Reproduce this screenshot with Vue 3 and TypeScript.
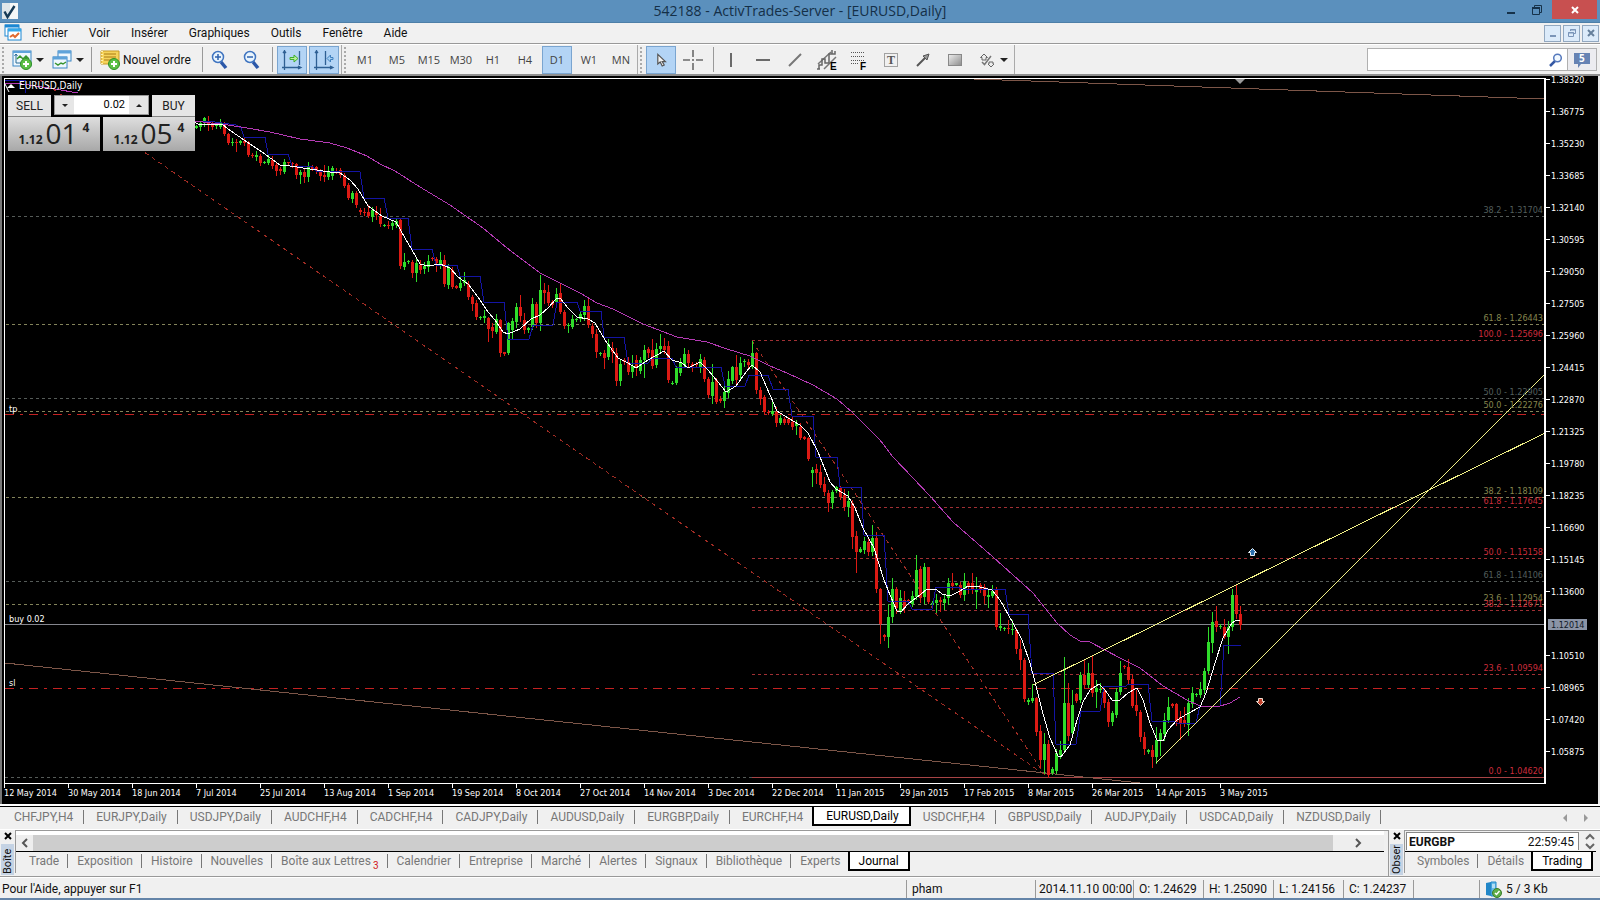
<script setup lang="ts">
import { ref } from 'vue'

interface Candle { x: number; high: number; top: number; bottom: number; low: number; up: boolean }
interface Level { y: number; label: string; kind: 'olive' | 'slate' | 'red'; from: number }

const menus = ['Fichier', 'Voir', 'Insérer', 'Graphiques', 'Outils', 'Fenêtre', 'Aide']
const timeframes = ['M1', 'M5', 'M15', 'M30', 'H1', 'H4', 'D1', 'W1', 'MN']
const timeframe = ref('D1')
const search = ref('')
const volume = ref('0.02')

const chartTabs = ['CHFJPY,H4', 'EURJPY,Daily', 'USDJPY,Daily', 'AUDCHF,H4', 'CADCHF,H4', 'CADJPY,Daily', 'AUDUSD,Daily', 'EURGBP,Daily', 'EURCHF,H4', 'EURUSD,Daily', 'USDCHF,H4', 'GBPUSD,Daily', 'AUDJPY,Daily', 'USDCAD,Daily', 'NZDUSD,Daily']
const chartTab = ref('EURUSD,Daily')
const boxTabs = ['Trade', 'Exposition', 'Histoire', 'Nouvelles', 'Boîte aux Lettres', 'Calendrier', 'Entreprise', 'Marché', 'Alertes', 'Signaux', 'Bibliothèque', 'Experts', 'Journal']
const boxTab = ref('Journal')
const marketTabs = ['Symboles', 'Détails', 'Trading']
const marketTab = ref('Trading')

const dates = ['12 May 2014', '30 May 2014', '18 Jun 2014', '7 Jul 2014', '25 Jul 2014', '13 Aug 2014', '1 Sep 2014', '19 Sep 2014', '8 Oct 2014', '27 Oct 2014', '14 Nov 2014', '3 Dec 2014', '22 Dec 2014', '11 Jan 2015', '29 Jan 2015', '17 Feb 2015', '8 Mar 2015', '26 Mar 2015', '14 Apr 2015', '3 May 2015']
const prices = Array.from({ length: 22 }, (_, i) => ({ y: i * 32 + 4, text: (1.3832 - i * 0.01545).toFixed(5) })).filter((_, i) => i !== 17)

const levels: Level[] = [
  { y: 216, label: '38.2 - 1.31704', kind: 'slate', from: 0 },
  { y: 324, label: '61.8 - 1.26443', kind: 'olive', from: 0 },
  { y: 340, label: '100.0 - 1.25696', kind: 'red', from: 752 },
  { y: 398, label: '50.0 - 1.22905', kind: 'slate', from: 0 },
  { y: 411, label: '50.0 - 1.22276', kind: 'olive', from: 0 },
  { y: 497, label: '38.2 - 1.18109', kind: 'olive', from: 0 },
  { y: 507, label: '61.8 - 1.17645', kind: 'red', from: 752 },
  { y: 558, label: '50.0 - 1.15158', kind: 'red', from: 752 },
  { y: 581, label: '61.8 - 1.14106', kind: 'slate', from: 0 },
  { y: 604, label: '23.6 - 1.12954', kind: 'olive', from: 0 },
  { y: 610, label: '38.2 - 1.12671', kind: 'red', from: 752 },
  { y: 674, label: '23.6 - 1.09594', kind: 'red', from: 752 },
]

// One bar every four pixels: direction, then high, body top, body bottom, low.
const bars = `g125,126,128,128 g121,123,127,130 g117,118,123,126 r116,121,125,130 r122,123,127,129 g123,125,126,128 g119,123,127,128 r122,125,134,135
r133,134,143,144 g138,142,143,145 r139,142,143,151 g140,141,143,144 r137,141,143,145 r141,142,155,156 r153,155,156,157 g151,155,157,160
r154,156,163,165 g161,162,163,163 g155,159,163,164 r156,160,166,168 r163,165,171,175 r167,169,171,174 g159,162,172,173 r162,162,163,165
r162,163,164,167 r163,164,175,178 g170,172,175,183 r168,172,177,182 g162,167,177,181 r165,167,169,170 r166,167,170,173 r169,171,176,180
r165,175,177,181 g166,171,177,179 g166,168,176,179 r168,171,172,173 r168,170,175,177 r173,175,186,187 r183,185,198,199 g191,193,199,202
r191,193,205,207 r208,210,212,214 r208,212,213,215 r205,212,216,217 g207,210,217,221 r206,212,215,219 r208,216,224,226 g224,225,226,226
r221,225,226,228 g221,223,226,229 g218,221,225,227 r219,220,266,268 g253,262,267,269 g260,261,262,263 r260,262,273,277 g258,263,273,281
r260,265,270,273 g262,266,269,273 g255,261,267,271 r257,258,259,260 r257,259,263,271 g252,260,264,268 r255,260,284,286 g264,267,285,288
r267,270,287,288 r285,286,288,288 g277,283,288,290 g272,280,283,285 r281,284,297,299 r295,297,304,310 r300,303,317,319 g316,317,318,319
g310,316,318,322 r317,318,329,341 r323,327,331,337 g314,319,332,333 r319,320,353,356 r352,352,354,355 g322,323,353,354 g318,321,330,339
g303,307,322,327 r295,307,316,321 r313,320,330,333 g327,328,330,332 g298,304,327,329 r302,304,323,327 g275,290,323,330 r283,290,293,303
r285,292,303,305 r300,302,305,307 g288,294,302,307 r284,293,312,313 r310,312,326,328 g323,325,326,332 g315,319,327,328 g318,319,320,321
g312,314,319,321 g300,306,315,320 r298,306,325,327 r323,326,334,337 r329,334,352,357 g352,353,354,355 r350,353,358,368 g339,344,357,359
r342,348,352,362 r348,353,381,385 g360,364,381,385 r358,360,362,364 r357,362,372,374 g355,366,372,377 r355,360,368,375 g357,360,371,373
g345,350,360,377 r347,349,353,357 r339,350,366,368 g343,349,365,367 g334,346,349,352 r338,346,350,353 r341,346,380,382 g381,383,384,384
g366,368,383,384 g358,363,373,375 g348,354,365,367 r350,354,363,367 r362,364,366,371 r362,364,365,366 g354,359,367,372 r357,360,379,381
r377,379,395,397 g364,382,396,403 r378,380,402,403 r396,399,401,402 g383,392,401,407 g371,379,393,397 g366,367,381,383 r355,367,380,384
g357,363,375,378 g359,361,362,366 r359,362,365,368 g341,353,367,368 r352,353,390,393 r387,390,399,404 r395,397,412,413 r410,412,413,414
g402,411,414,415 r407,412,423,426 g415,418,423,424 r417,419,423,424 r417,419,423,424 r417,422,427,429 g420,423,426,434 r423,427,438,439
r436,437,439,439 r437,438,459,460 g467,470,473,486 r464,469,473,483 r465,472,485,487 r477,484,492,495 r490,493,503,511 g490,492,503,508
g486,487,491,492 r486,488,497,499 r489,495,507,510 g491,501,507,516 r500,503,537,548 r531,536,552,572 g547,549,552,552 g537,541,550,553
r537,542,552,555 g525,538,552,555 r532,538,589,592 r588,589,624,643 r634,635,637,640 g604,617,637,647 g578,589,617,622 r587,589,608,613
g590,598,611,613 r591,600,608,612 r599,600,601,603 g591,596,604,606 g555,570,597,599 r566,569,598,602 g563,567,597,603 r567,567,602,603
g601,603,605,608 g594,600,603,612 r597,600,602,611 g595,599,603,609 g578,583,598,604 r573,583,586,589 g583,583,585,585 r582,585,595,597
g573,581,595,600 r581,583,587,593 r573,583,589,593 g577,589,592,608 r583,585,590,592 r584,587,596,603 g589,595,597,607 g585,591,596,597
r587,590,627,629 g613,626,628,630 g627,628,629,630 r620,628,629,633 g620,629,630,634 r628,630,649,653 r640,649,660,669 r658,660,699,701
g698,700,702,704 g684,698,701,702 r697,698,732,735 r725,731,760,767 g733,744,760,773 r740,744,775,777 g767,769,773,774 g749,753,771,773
g741,750,755,758 g657,703,750,752 r683,703,736,740 g690,705,733,737 r693,694,701,702 g672,675,700,702 r659,675,685,688 g663,673,685,687
r656,673,693,696 g680,688,692,707 g683,689,690,692 r688,690,703,707 r699,702,722,726 g711,713,722,725 g688,692,715,717 g661,673,692,694
r665,666,667,668 r659,667,680,684 r674,679,706,707 r690,705,711,715 r710,712,737,741 r732,737,749,754 g749,750,752,753 r745,750,757,767
g727,740,757,763 g729,733,740,755 g713,720,734,740 g697,707,720,722 r703,704,706,707 r703,704,722,725 r711,717,723,739 r707,720,724,726
g698,703,725,735 g687,693,704,707 g693,694,695,696 g682,689,695,697 g668,671,690,693 g627,642,671,673 g612,622,643,652 r606,621,627,631
g624,626,627,628 r619,627,637,638 g621,627,637,653 g589,595,627,630 r584,595,614,618 r606,614,625,629`

const candles: Candle[] = bars.split(/\s+/).map((bar, i) => {
  const [high, top, bottom, low] = bar.slice(1).split(',').map(Number)
  return { x: 196 + i * 4, high, top, bottom, low, up: bar[0] === 'g' }
})

const fastAverage = '194,122 200,125 222,124 228,129 247,142 262,152 280,165 290,166 310,169 330,172 340,173 350,180 358,189 368,206 382,216 396,222 405,238 412,250 420,264 428,266 440,264 450,268 458,277 468,284 478,297 488,312 495,320 503,332 508,334 515,331 520,329 531,319 540,315 548,308 556,299 560,298 568,308 577,317 588,319 595,323 605,340 618,358 628,363 636,368 648,360 664,351 672,360 682,363 688,368 700,362 708,370 718,382 726,392 736,386 746,372 752,365 760,372 770,395 777,411 788,418 800,425 808,433 818,452 830,482 836,489 848,496 855,508 863,528 874,548 884,580 890,595 897,611 901,612 908,604 920,595 927,589 937,590 942,594 950,596 960,591 968,586 980,587 992,590 1000,600 1013,623 1022,640 1030,663 1035,682 1042,710 1050,738 1058,756 1061,757 1070,745 1077,720 1083,702 1090,690 1099,684 1105,690 1112,700 1120,700 1128,693 1137,688 1143,700 1150,723 1157,740 1163,741 1168,730 1177,720 1187,714 1200,707 1206,693 1215,663 1223,638 1232,623 1237,620 1240,620'
const slowAverage = '194,121 228,125 247,128 270,132 300,139 330,143 347,148 367,156 380,164 395,171 420,187 450,205 483,228 507,248 527,263 540,273 560,283 580,293 597,303 613,309 643,324 677,337 707,342 727,349 750,356 770,366 787,373 813,385 837,399 853,413 880,440 893,457 913,478 930,496 953,522 993,557 1033,593 1057,623 1070,635 1080,641 1090,642 1120,658 1140,668 1163,686 1187,700 1200,706 1217,707 1230,703 1240,697'
const steps = '194,121 208,121 236,125 241,128 244,137 265,137 268,154 288,154 292,166 312,166 316,171 360,172 364,198 384,198 388,218 408,218 412,249 432,249 436,265 457,265 460,276 480,276 484,302 504,302 508,339 529,339 533,325 553,325 557,302 577,302 580,311 601,311 604,337 624,337 628,363 648,363 652,358 672,358 676,367 721,367 725,386 745,386 749,375 768,375 773,389 788,389 792,416 813,416 816,457 837,457 840,487 861,487 864,535 884,535 888,601 908,601 912,609 932,609 936,587 957,587 962,589 1005,589 1009,614 1028,614 1032,673 1053,673 1056,744 1076,744 1081,711 1100,711 1104,686 1126,686 1128,684 1148,684 1152,721 1175,721 1177,723 1196,723 1200,706 1220,706 1224,645 1241,645'

function stepVolume(delta: number) {
  volume.value = Math.max(0.01, Number(volume.value) + delta).toFixed(2)
}
</script>

<template>
  <div class="window">
    <header class="titlebar">
      <svg class="app-icon" width="16" height="16" viewBox="0 0 16 16">
        <rect width="16" height="16" fill="#dfe6ea" />
        <rect x="8" width="8" height="16" fill="#f4f7f8" />
        <path d="M2.5 8.5l3 5.5L12.5 3" fill="none" stroke="#163a56" stroke-width="2.4" />
      </svg>
      <h1>542188 - ActivTrades-Server - [EURUSD,Daily]</h1>
      <div class="window-buttons">
        <button aria-label="Réduire"><svg width="12" height="12"><path d="M2 9h8" stroke="#16324a" stroke-width="2" /></svg></button>
        <button aria-label="Restaurer"><svg width="12" height="12"><path d="M3.5 3V1.500h7v7H9M1.500 4h7v6.500h-7z" fill="none" stroke="#16324a" /><path d="M1 4h8" stroke="#16324a" stroke-width="2" /></svg></button>
        <button class="close" aria-label="Fermer"><svg width="12" height="12"><path d="M3 3l6 6M9 3l-6 6" stroke="#fff" stroke-width="2" /></svg></button>
      </div>
    </header>

    <nav class="menubar">
      <svg class="doc-icon" width="18" height="18" viewBox="0 0 18 18">
        <rect x="1" y="1" width="14" height="11" fill="#fff" stroke="#1c87d2" /><path d="M1 2h14" stroke="#1c87d2" stroke-width="3" />
        <rect x="4" y="5" width="13" height="11" fill="#fff" stroke="#1c87d2" /><path d="M4 6h13" stroke="#35a8ea" stroke-width="3" />
        <path d="M6 13l3-2 2 2 4-4" fill="none" stroke="#e06a30" stroke-width="2" />
      </svg>
      <button v-for="m in menus" :key="m" class="menu">{{ m }}</button>
      <div class="mdi-buttons">
        <button aria-label="Réduire la fenêtre"><svg width="10" height="10"><path d="M2 8h6" stroke="#7b95b8" stroke-width="2" /></svg></button>
        <button aria-label="Restaurer la fenêtre"><svg width="10" height="10"><path d="M3.500 3V1.500h5v4H7M1.500 4.500h5v4h-5z" fill="none" stroke="#7b95b8" /><path d="M3 2h6M1 5h6" stroke="#7b95b8" stroke-width="1" /></svg></button>
        <button aria-label="Fermer la fenêtre"><svg width="10" height="10"><path d="M2 2l6 6M8 2L2 8" stroke="#66809c" stroke-width="2" /></svg></button>
      </div>
    </nav>

    <div class="toolbar">
      <span class="grip"></span>
      <button class="tool drop" aria-label="Nouveau graphique">
        <svg width="20" height="20" viewBox="0 0 20 20">
          <rect x="1" y="1" width="18" height="15" fill="#eef7fd" stroke="#3b86c4" /><path d="M1 2h18" stroke="#5ea3da" stroke-width="2" />
          <path d="M4 4v9h11M2.500 6L4 4l1.500 2" fill="none" stroke="#2b6a94" /><path d="M5 9l3-3 3 3 3-3 3 3" fill="none" stroke="#38952e" stroke-width="1.500" />
          <circle cx="14" cy="14" r="5.500" fill="#5cc046" stroke="#2f8f24" /><path d="M14 11v6M11 14h6" stroke="#fff" stroke-width="2" />
        </svg>
        <i class="caret"></i>
      </button>
      <button class="tool drop" aria-label="Profils">
        <svg width="20" height="20" viewBox="0 0 20 20">
          <rect x="6" y="1" width="13" height="10" fill="#eef7fd" stroke="#3b86c4" /><path d="M6 2h13" stroke="#5ea3da" stroke-width="3" />
          <rect x="1" y="7" width="14" height="11" fill="#eef7fd" stroke="#3b86c4" /><path d="M1 8h14" stroke="#5ea3da" stroke-width="3" />
          <path d="M3 13l3 2 3-2 2 1 3-2" fill="none" stroke="#38952e" stroke-width="1.500" />
        </svg>
        <i class="caret"></i>
      </button>
      <span class="sep"></span>
      <button class="order">
        <svg width="20" height="20" viewBox="0 0 20 20">
          <path d="M1 1h18v13H1z" fill="#f6d35b" stroke="#c79a23" /><path d="M4 4h12M4 7h12M4 10h8" stroke="#a97a14" /><path d="M2 1v13" stroke="#fff1b0" stroke-dasharray="1 2" stroke-width="2" />
          <circle cx="14" cy="14" r="5.500" fill="#5cc046" stroke="#2f8f24" /><path d="M14 11v6M11 14h6" stroke="#fff" stroke-width="2" />
        </svg>
        Nouvel ordre
      </button>
      <span class="sep tight"></span>
      <button class="tool" aria-label="Zoom avant">
        <svg width="20" height="20" viewBox="0 0 20 20"><path d="M11 12l5 6" stroke="#2c58a8" stroke-width="3.500" /><circle cx="8" cy="7" r="5.500" fill="#eaf5fd" stroke="#3f74c0" stroke-width="1.500" /><path d="M8 4v6M5 7h6" stroke="#2f62ae" stroke-width="1.500" /></svg>
      </button>
      <button class="tool" aria-label="Zoom arrière">
        <svg width="20" height="20" viewBox="0 0 20 20"><path d="M11 12l5 6" stroke="#2c58a8" stroke-width="3.500" /><circle cx="8" cy="7" r="5.500" fill="#eaf5fd" stroke="#3f74c0" stroke-width="1.500" /><path d="M5 7h6" stroke="#2f62ae" stroke-width="1.500" /></svg>
      </button>
      <span class="sep"></span>
      <button class="tool on" aria-label="Défilement automatique">
        <svg width="22" height="22" viewBox="0 0 22 22"><path d="M3.500 1v20M1 18.500h19M18.500 2v14M2 4l1.500-2L5 4M17 17l3 1.500-3 1.500" fill="none" stroke="#2e5f93" stroke-width="1.300" /><path d="M9 8.500h4V6l4 3.500-4 3.500v-2.500H9z" fill="#b9ee9c" stroke="#3fae2c" /></svg>
      </button>
      <button class="tool on" aria-label="Décaler le graphique">
        <svg width="22" height="22" viewBox="0 0 22 22"><path d="M3.500 1v20M1 18.500h19M12.500 2v14M2 4l1.500-2L5 4M17 17l3 1.500-3 1.500" fill="none" stroke="#2e5f93" stroke-width="1.300" /><path d="M20 8.500h-2.500V6L14 9.500l3.500 3.500v-2.500H20z" fill="#a5cff2" stroke="#3f7fbe" /></svg>
      </button>
      <span class="edge"></span>
      <span class="grip"></span>
      <button v-for="t in timeframes" :key="t" class="tool tf" :class="{ on: timeframe === t }" @click="timeframe = t">{{ t }}</button>
      <span class="edge wide"></span>
      <span class="grip"></span>
      <button class="tool on" aria-label="Curseur">
        <svg width="16" height="16" viewBox="0 0 20 20"><path d="M6 3v12l3-2.500 2.500 5 2.500-1.200-2.500-4.300h4z" fill="#f2f2f2" stroke="#555" stroke-width="1.500" /></svg>
      </button>
      <button class="tool" aria-label="Réticule">
        <svg width="20" height="20" viewBox="0 0 20 20"><path d="M10 0v7M10 13v7M0 10h7M13 10h7M10 9v2" stroke="#6a6a6a" stroke-width="1.600" /></svg>
      </button>
      <span class="sep tight"></span>
      <button class="tool" aria-label="Ligne verticale"><svg width="20" height="20" viewBox="0 0 20 20"><path d="M10 3v14" stroke="#6a6a6a" stroke-width="2" /></svg></button>
      <button class="tool" aria-label="Ligne horizontale"><svg width="20" height="20" viewBox="0 0 20 20"><path d="M3 10h14" stroke="#6a6a6a" stroke-width="2" /></svg></button>
      <button class="tool" aria-label="Ligne de tendance"><svg width="20" height="20" viewBox="0 0 20 20"><path d="M4 16L16 4" stroke="#777" stroke-width="2" /></svg></button>
      <button class="tool" aria-label="Canal équidistant">
        <svg width="22" height="22" viewBox="0 0 22 22"><path d="M2 15L15 3M8 20L20 8" stroke="#777" stroke-width="1.500" /><path d="M3 20v-4h3v-6h3v4h4V5h3V1M1 20h3M16 5h3V2" fill="none" stroke="#666" stroke-width="1.500" /><text x="14" y="21" class="glyph">E</text></svg>
      </button>
      <button class="tool" aria-label="Fibonacci">
        <svg width="22" height="22" viewBox="0 0 22 22"><path d="M3 3.500h14M3 7.500h14M3 11.500h14M3 14.500h8" stroke="#555" stroke-dasharray="1 1" /><text x="12" y="21" class="glyph">F</text></svg>
      </button>
      <button class="tool" aria-label="Texte">
        <svg width="20" height="20" viewBox="0 0 20 20"><rect x="3.500" y="3.500" width="13" height="13" fill="none" stroke="#555" stroke-dasharray="1 1" /><text x="6" y="14" class="letter">T</text></svg>
      </button>
      <button class="tool" aria-label="Flèche"><svg width="20" height="20" viewBox="0 0 20 20"><path d="M4 16l8-8" stroke="#555" stroke-width="2" /><path d="M10 6l6-2-2 6z" fill="#999" stroke="#555" /></svg></button>
      <button class="tool" aria-label="Rectangle">
        <svg width="20" height="20" viewBox="0 0 20 20"><defs><linearGradient id="shade" x2="1" y2="1"><stop stop-color="#eee" /><stop offset="1" stop-color="#8c8c8c" /></linearGradient></defs><rect x="3.500" y="4.500" width="13" height="11" fill="url(#shade)" stroke="#888" /></svg>
      </button>
      <button class="tool drop shapes" aria-label="Formes">
        <svg width="16" height="18" viewBox="0 0 16 18"><path d="M5 3l3.500 3.500H7V9H3V6.500H1.500zM12 16l-3-3h1v-2h4v2h1z" fill="#eee" stroke="#666" /><path d="M3 11l2.500 2.500L12 5" fill="none" stroke="#777" stroke-width="1.500" /></svg>
        <i class="caret"></i>
      </button>
      <span class="edge"></span>
      <div class="search">
        <input v-model="search" aria-label="Rechercher" />
        <svg width="14" height="14" viewBox="0 0 14 14"><path d="M1 13l5-5" stroke="#3558a4" stroke-width="2.500" /><circle cx="8.500" cy="5" r="3.800" fill="#f2f9ff" stroke="#5578bc" stroke-width="1.500" /></svg>
        <button aria-label="Messages"><svg width="18" height="16" viewBox="0 0 18 16"><path d="M1 1h16v11H8l-3 4v-4H1z" fill="#6683b4" /><text x="6" y="10" class="count">5</text></svg></button>
      </div>
    </div>

    <main class="chart">
      <div class="plot">
        <svg class="canvas" width="100%" height="100%">
          <g transform="translate(-5,-79)">
            <g class="crisp">
              <line v-for="l in levels" :key="l.label" :class="['level', l.kind]" :x1="l.from" x2="3000" :y1="l.y + 0.5" :y2="l.y + 0.5" />
              <line class="level slate" x1="5" x2="752" y1="777.5" y2="777.5" />
              <line class="zero" x1="752" x2="3000" y1="777.5" y2="777.5" />
              <line class="stop" x1="5" x2="3000" y1="414.5" y2="414.5" />
              <line class="stop" x1="5" x2="3000" y1="688.5" y2="688.5" />
              <line class="entry" x1="5" x2="3000" y1="624.5" y2="624.5" />
            </g>
            <path class="fan" d="M40 80L1045 775M752 341L1045 775" />
            <path class="trend" d="M5 663L1140 783M945 78L1545 99" />
            <g class="crisp">
              <g v-for="c in candles" :key="c.x" :class="c.up ? 'up' : 'down'">
                <rect :x="c.x" :y="c.high" width="1" :height="c.low - c.high + 1" />
                <rect :x="c.x - 1" :y="c.top" width="3" :height="Math.max(1, c.bottom - c.top)" />
              </g>
            </g>
            <polyline class="steps" :points="steps" />
            <polyline class="slow" :points="slowAverage" />
            <polyline class="slow" points="5,83 22,84 55,89 78,93" />
            <polyline class="steps" points="5,80 25,80 26,93" />
            <polyline class="fast" :points="fastAverage" />
            <path class="wedge" d="M1033 685L1545 433M1156 763L1545 374" />
            <path d="M1235 79h10l-5 5z" fill="#9a9a9a" />
            <path d="M1252.500 548.500l4 4h-2v3h-4v-3h-2z" fill="#2a6fae" stroke="#e4eef5" />
            <path d="M1260.500 705.500l4-4h-2v-3h-4v3h-2z" fill="#c0402a" stroke="#f0ddd0" />
            <path d="M7 88l4-4 4 4z" fill="#fff" /><path d="M5 84l4 8" stroke="#fff" />
            <text class="note name" x="19" y="89">EURUSD,Daily</text>
            <text class="note" x="9" y="412">tp</text>
            <text class="note" x="9" y="622">buy 0.02</text>
            <text class="note" x="9" y="686">sl</text>
          </g>
          <g v-for="l in levels" :key="l.label">
            <text :class="['tag', l.kind]" x="100%" dx="-1" :y="l.y - 82">{{ l.label }}</text>
          </g>
          <text class="tag red" x="100%" dx="-1" y="695">0.0 - 1.04620</text>
        </svg>

        <section class="trade" aria-label="Trading en un clic">
          <button class="side">SELL</button>
          <div class="volume">
            <button aria-label="Diminuer" @click="stepVolume(-0.01)"><i class="caret small"></i></button>
            <input v-model="volume" aria-label="Volume" />
            <button aria-label="Augmenter" @click="stepVolume(0.01)"><i class="caret small flip"></i></button>
          </div>
          <button class="side">BUY</button>
          <div class="quote sell"><b>1.12</b><span>01</span><sup>4</sup></div>
          <div class="quote buy"><b>1.12</b><span>05</span><sup>4</sup></div>
        </section>
      </div>
      <svg class="prices" width="52" height="100%">
        <g v-for="p in prices" :key="p.text">
          <path :d="`M0 ${p.y - 2.5}h4`" stroke="#fff" />
          <text class="note" x="5" :y="p.y + 1">{{ p.text }}</text>
        </g>
        <rect x="2" y="541" width="39" height="11" fill="#8b94a6" />
        <text class="current" x="5" y="550">1.12014</text>
      </svg>
      <svg class="dates" width="100%" height="20">
        <g v-for="(d, i) in dates" :key="d">
          <path :d="`M${i * 64 + 0.5} 0v4`" stroke="#fff" />
          <text class="note" :x="i * 64" y="12">{{ d }}</text>
        </g>
      </svg>
    </main>

    <div class="chart-tabs">
      <button v-for="t in chartTabs" :key="t" :class="{ active: chartTab === t }" @click="chartTab = t"><span>{{ t }}</span></button>
      <div class="pager">
        <button aria-label="Précédent"><svg width="6" height="8"><path d="M5 0v8L1 4z" fill="#999" /></svg></button>
        <button aria-label="Suivant"><svg width="6" height="8"><path d="M1 0v8l4-4z" fill="#999" /></svg></button>
      </div>
    </div>

    <div class="panels">
      <section class="panel box">
        <div class="rail"><button aria-label="Fermer Boîte"><svg width="8" height="8"><path d="M1 1l6 6M7 1L1 7" stroke="#000" stroke-width="2" /></svg></button><span>Boîte</span></div>
        <div class="content">
          <div class="scroll">
            <button aria-label="Gauche"><svg width="8" height="10"><path d="M6 1L2 5l4 4" fill="none" stroke="#555" stroke-width="2" /></svg></button>
            <div class="thumb"></div>
            <button aria-label="Droite"><svg width="8" height="10"><path d="M2 1l4 4-4 4" fill="none" stroke="#555" stroke-width="2" /></svg></button>
          </div>
          <div class="tabs">
            <button v-for="t in boxTabs" :key="t" :class="{ active: boxTab === t }" @click="boxTab = t"><span>{{ t }}<em v-if="t === 'Boîte aux Lettres'">3</em></span></button>
          </div>
        </div>
      </section>
      <section class="panel market">
        <div class="rail"><button aria-label="Fermer Observation"><svg width="8" height="8"><path d="M1 1l6 6M7 1L1 7" stroke="#000" stroke-width="2" /></svg></button><span>Obser</span></div>
        <div class="content">
          <div class="symbol">
            <div class="card"><b>EURGBP</b><time>22:59:45</time></div>
            <div class="updown">
              <button aria-label="Haut"><svg width="10" height="7"><path d="M1 6l4-4 4 4" fill="none" stroke="#666" stroke-width="2" /></svg></button>
              <button aria-label="Bas"><svg width="10" height="7"><path d="M1 1l4 4 4-4" fill="none" stroke="#666" stroke-width="2" /></svg></button>
            </div>
          </div>
          <div class="tabs">
            <button v-for="t in marketTabs" :key="t" :class="{ active: marketTab === t }" @click="marketTab = t"><span>{{ t }}</span></button>
          </div>
        </div>
      </section>
    </div>

    <footer class="status">
      <span class="help">Pour l'Aide, appuyer sur F1</span>
      <span class="cell profile">pham</span>
      <span class="cell stamp">2014.11.10 00:00</span>
      <span class="cell value">O: 1.24629</span>
      <span class="cell value">H: 1.25090</span>
      <span class="cell value">L: 1.24156</span>
      <span class="cell value">C: 1.24237</span>
      <span class="cell gap"></span>
      <span class="cell traffic">
        <svg width="17" height="17" viewBox="0 0 17 17"><path d="M1 2l5-1v14l-5-1z" fill="#2287c8" /><path d="M6 1h5v14H6z" fill="#67bdea" stroke="#2287c8" /><path d="M7 4h3M7 6h3" stroke="#fff" /><circle cx="12" cy="12" r="4.500" fill="#5fae48" stroke="#3a7c2a" /><path d="M10 12l1.500 1.500L14.500 10" fill="none" stroke="#fff" stroke-width="1.500" /></svg>
        5 / 3 Kb
      </span>
    </footer>
    <div class="desk"></div>
  </div>
</template>

<style>
body { margin: 0; background: #f0f0f0; }
</style>

<style scoped>
.window { display: flex; flex-direction: column; min-height: 100vh; background: #f0f0f0; color: #111; font: 12px/16px Roboto, "Open Sans", sans-serif; }
.window * { box-sizing: border-box; }
button { font: inherit; color: inherit; background: none; border: 0; padding: 0; margin: 0; display: flex; align-items: center; justify-content: center; cursor: pointer; white-space: nowrap; }
input { font: inherit; border: 0; padding: 0; min-width: 0; outline: 0; }
svg { display: block; flex: none; }

.titlebar { display: flex; align-items: center; height: 23px; background: #5b90bd; border-bottom: 1px solid #4d7fa8; }
.app-icon { margin-left: 2px; }
h1 { flex: 1; margin: 0; padding-left: 84px; text-align: center; font-family: "Open Sans", sans-serif; font-size: 14px; line-height: 22px; font-weight: 400; color: #142f47; }
.window-buttons { display: flex; height: 19px; align-self: flex-start; padding-right: 3px; }
.window-buttons button { width: 26px; }
.window-buttons .close { width: 45px; background: #c85050; margin-left: 2px; }

.menubar { display: flex; align-items: center; gap: 21px; height: 21px; background: #f1f1f1; border-bottom: 1px solid #999; }
.doc-icon { margin: 0 -11px 0 4px; }
.mdi-buttons { display: flex; gap: 2px; margin-left: auto; padding-right: 1px; }
.mdi-buttons button { width: 17px; height: 17px; background: #dcebfa; border: 1px solid #92a8c0; }

.toolbar { display: flex; align-items: center; height: 32px; border-top: 1px solid #fff; border-bottom: 2px solid #8f8f8f; }
.grip { width: 3px; height: 26px; margin: 0 2px; border-left: 2px dotted #aaa; flex: none; }
.tool { width: 30px; height: 28px; margin: 0 1px; border: 1px solid transparent; flex: none; }
.tool.on { background: #b3d4f5; border-color: #7aa5d0; }
.tool.drop { width: 38px; gap: 4px; justify-content: flex-start; padding-left: 3px; }
.tool.tf { color: #444; font-family: "Open Sans", sans-serif; font-size: 11px; }
.tool.shapes { width: 40px; padding-left: 6px; gap: 5px; }
.caret { width: 0; height: 0; border: 4px solid transparent; border-top-color: #222; border-bottom: 0; }
.caret.small { border-width: 3px; border-bottom: 0; }
.caret.flip { border: 3px solid transparent; border-bottom-color: #222; border-top: 0; }
.sep { width: 1px; height: 25px; margin: 0 3px 0 4px; background: #999; flex: none; }
.sep.tight { margin-right: 1px; }
.edge { width: 1px; height: 29px; background: #aaa; margin: 0 0 0 1px; flex: none; }
.edge.wide { margin-left: 0; }
.order { gap: 3px; height: 28px; padding: 0 7px 0 5px; }
.glyph { font: bold 10px "Liberation Sans", sans-serif; fill: #000; }
.letter { font: bold 12px "Liberation Serif", serif; fill: #555; }
.count { font: bold 10px "Open Sans", sans-serif; fill: #fff; }
.search { display: flex; align-items: center; margin-left: auto; margin-right: 3px; width: 230px; height: 23px; background: #fff; border: 1px solid #b0b0b0; }
.search input { flex: 1; height: 19px; background: transparent; }
.search svg { margin-right: 4px; }
.search button { width: 29px; height: 21px; background: #ececf0; border-left: 1px solid #b0b0b0; }
.search button svg { margin: 0; }

.chart { flex: 1; display: grid; grid-template-columns: 1fr 52px; grid-template-rows: 1fr 20px; min-height: 600px; background: #000; border-left: 2px solid #777; border-right: 2px solid #e8e8e8; padding: 2px 0 0 2px; }
.plot { position: relative; min-width: 0; border: 1px solid #fff; border-width: 1px 2px 1px 1px; }
.canvas { position: absolute; inset: 0; overflow: hidden; }
.prices { overflow: visible; }
.dates { grid-column: 1 / 3; overflow: visible; }
.crisp, .steps, .slow, .fast, .wedge, .fan, .trend { shape-rendering: crispEdges; }
.level { fill: none; stroke-dasharray: 3 3; }
line.olive { stroke: #83835a; }
line.slate { stroke: #555b58; }
line.red { stroke: #a03034; }
.zero { stroke: #a84446; }
.stop { stroke: #c42222; stroke-dasharray: 9 6 3 6; }
.entry { stroke: #85868e; }
.fan { fill: none; stroke: #a02c24; stroke-dasharray: 4 4; }
.trend { fill: none; stroke: #7d5648; }
.wedge { fill: none; stroke: #efef86; }
.up { fill: #2fdc2a; }
.down { fill: #dc1a14; }
.steps { fill: none; stroke: #1414a4; }
.slow { fill: none; stroke: #b43ab4; }
.fast { fill: none; stroke: #fff; }
.note, .current, .tag { font: 9px "DejaVu Sans Condensed", "DejaVu Sans", sans-serif; }
.note { fill: #fff; }
.note.name { font-size: 10px; }
.current { fill: #111a26; }
.tag { text-anchor: end; }
.tag.olive { fill: #86864e; }
.tag.slate { fill: #525e5c; }
.tag.red { fill: #cc2c3c; }

.trade { position: absolute; left: 3px; top: 16px; width: 187px; display: grid; grid-template-columns: 43px 1fr 43px; grid-template-rows: 22px 34px; column-gap: 3px; background: #000; }
.side { background: #e6e6e6; border-bottom: 1px solid #888; color: #222; }
.volume { display: flex; height: 20px; border: 1px solid #999; margin-bottom: 2px; }
.volume button { width: 19px; background: #e6e6e6; }
.volume input { flex: 1; width: 20px; text-align: right; padding-right: 4px; background: #fff; font-size: 11px; }
.quote { grid-row: 2; display: flex; align-items: baseline; justify-content: center; height: 34px; color: #222; background: linear-gradient(#dedede, #a8a8a8); width: 92px; font-family: "Open Sans", sans-serif; }
.quote.sell { grid-column: 1 / 3; }
.quote.buy { justify-self: end; grid-column: 2 / 4; }
.quote b { font-size: 12px; line-height: 34px; margin-right: 3px; }
.quote span { font-size: 28px; line-height: 32px; }
.quote sup { font-size: 12px; font-weight: 700; line-height: 14px; align-self: flex-start; margin: 4px 0 0 5px; }

.chart-tabs { display: flex; height: 26px; border-top: 2px solid #fff; box-shadow: inset 0 1px #000; padding-left: 2px; color: #777; border-bottom: 1px solid #fff; }
.chart-tabs > button { height: 20px; align-items: flex-start; }
.chart-tabs > button span { height: 14px; line-height: 14px; margin-top: 4px; padding: 0 10px 0 12px; border-right: 1px solid #777; }
.chart-tabs > .active { background: #fff; color: #000; border: 2px solid #000; border-width: 1px 2px 2px 2px; margin-left: -2px; }
.chart-tabs > .active span { margin-top: 2px; }
.chart-tabs > .active span, .tabs > .active span { border: 0; }
.pager { display: flex; gap: 15px; margin-left: auto; padding-right: 11px; }

.panels { display: flex; height: 47px; border-bottom: 1px solid #999; }
.panel { display: flex; min-width: 0; }
.box { flex: 1; }
.market { width: 212px; border-left: 1px solid #999; }
.rail { display: flex; flex-direction: column; align-items: center; gap: 4px; width: 15px; padding-top: 2px; }
.rail span { writing-mode: vertical-rl; transform: rotate(180deg); height: 31px; width: 13px; line-height: 13px; background: #c5d3e4; font-size: 11px; padding-top: 1px; white-space: nowrap; }
.content { flex: 1; display: flex; flex-direction: column; min-width: 0; border-top: 1px solid #999; border-left: 1px solid #999; margin-bottom: 3px; }
.scroll { display: flex; height: 20px; margin-right: 4px; padding-top: 4px; background: linear-gradient(#fff 4px, #eee 4px); }
.scroll button { width: 17px; }
.thumb { flex: 1; background: #cdcdcd; }
.box .scroll { padding-right: 2px; }
.box .scroll button:last-child { width: 49px; }
.tabs { display: flex; flex: 1; border-top: 1px solid #000; margin-right: 4px; padding-left: 4px; color: #777; }
.tabs > button { height: 19px; align-items: flex-start; }
.tabs > button span { line-height: 14px; height: 14px; margin-top: 2px; padding: 0 8px 0 9px; border-right: 1px solid #777; }
.tabs > .active { background: #fff; color: #000; border: 2px solid #000; border-top: 0; margin-left: -2px; }
.tabs > .active span { padding: 0 9px; }
.tabs em { font-style: normal; font-size: 10px; color: #d02020; margin-left: 2px; position: relative; top: 4px; }
.market .tabs { padding-left: 3px; }
.symbol { display: flex; height: 20px; }
.card { flex: 1; display: flex; align-items: center; justify-content: space-between; background: #fff; border: 1px solid #888; border-bottom: 0; padding: 0 4px 0 2px; margin: 1px; }
.updown { width: 20px; display: flex; flex-direction: column; align-items: center; justify-content: space-around; }

.status { display: flex; align-items: center; height: 21px; padding: 2px 0 0 2px; border-top: 1px solid #fff; }
.help { flex: 1; }
.cell { height: 18px; line-height: 18px; padding-left: 5px; border-left: 1px solid #999; white-space: nowrap; }
.profile { width: 129px; }
.stamp { width: 98px; padding-left: 3px; }
.value { width: 70px; }
.gap { width: 66px; }
.traffic { width: 121px; display: flex; align-items: center; gap: 4px; }
.desk { height: 2px; background: #6484a8; }
</style>
